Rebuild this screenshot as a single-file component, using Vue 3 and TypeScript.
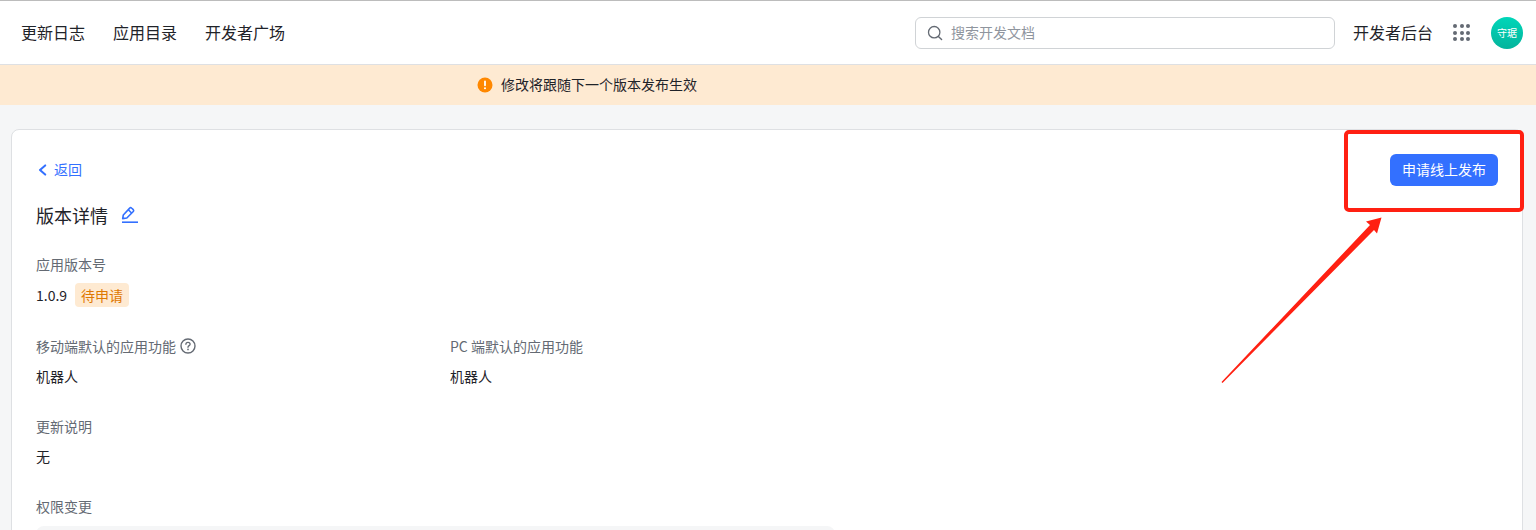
<script setup lang="ts">
const navItems: string[] = ['更新日志', '应用目录', '开发者广场']
const dots: number[] = [1, 2, 3, 4, 5, 6, 7, 8, 9]
</script>

<template>
  <div class="page">
    <header class="header">
      <nav class="nav">
        <a v-for="item in navItems" :key="item" class="nav-item">{{ item }}</a>
      </nav>
      <div class="search">
        <svg class="search-icon" width="16" height="16" viewBox="0 0 16 16" fill="none">
          <circle cx="7.2" cy="7.2" r="5.7" stroke="#646a73" stroke-width="1.3" />
          <path d="M11.4 11.4L14.6 14.6" stroke="#646a73" stroke-width="1.4" stroke-linecap="round" />
        </svg>
        <span class="placeholder">搜索开发文档</span>
      </div>
      <a class="console">开发者后台</a>
      <div class="grid-icon">
        <i v-for="d in dots" :key="d" class="dot"></i>
      </div>
      <div class="avatar">守琚</div>
    </header>

    <div class="banner">
      <svg width="16" height="16" viewBox="0 0 16 16">
        <circle cx="8" cy="8" r="7.5" fill="#ff8800" />
        <rect x="7.1" y="3.6" width="1.8" height="5.6" rx="0.9" fill="#fff" />
        <circle cx="8" cy="11.2" r="1.05" fill="#fff" />
      </svg>
      <span class="banner-text">修改将跟随下一个版本发布生效</span>
    </div>

    <main class="card">
      <div class="topline">
        <a class="back">
          <svg width="12" height="12" viewBox="0 0 12 12" fill="none">
            <path d="M9.2 1.4L4 6L9.2 10.6" stroke="#3370ff" stroke-width="2" stroke-linecap="round" stroke-linejoin="round" />
          </svg>
          <span class="back-text">返回</span>
        </a>
        <button class="publish" type="button">申请线上发布</button>
      </div>

      <div class="title-row">
        <h1 class="title">版本详情</h1>
        <svg class="edit-icon" width="18" height="18" viewBox="0 0 18 18" fill="none">
          <path d="M2.7 12.6L3.3 9L9.7 2.1C10.2 1.5 11 1.5 11.5 2L13.3 3.7C13.8 4.2 13.8 5 13.3 5.5L6.8 12L2.7 12.6Z" stroke="#3370ff" stroke-width="1.6" stroke-linejoin="round" />
          <path d="M8.3 3.8L11.6 7" stroke="#3370ff" stroke-width="1.6" />
          <path d="M2 16.2H18" stroke="#3370ff" stroke-width="1.6" />
        </svg>
      </div>

      <section class="field version">
        <div class="label">应用版本号</div>
        <div class="value version-value">
          <span>1.0.9</span>
          <span class="tag">待申请</span>
        </div>
      </section>

      <section class="two-col">
        <div class="field col">
          <div class="label label-icon">
            <span>移动端默认的应用功能</span>
            <svg width="16" height="16" viewBox="0 0 16 16" fill="none">
              <circle cx="8" cy="8" r="7" stroke="#646a73" stroke-width="1.4" />
              <path d="M5.9 6.3C5.9 5.1 6.8 4.3 8 4.3C9.2 4.3 10.1 5.1 10.1 6.2C10.1 7.6 8 7.7 8 9.3" stroke="#646a73" stroke-width="1.3" stroke-linecap="round" />
              <circle cx="8" cy="11.4" r="0.85" fill="#646a73" />
            </svg>
          </div>
          <div class="value">机器人</div>
        </div>
        <div class="field col">
          <div class="label">PC 端默认的应用功能</div>
          <div class="value">机器人</div>
        </div>
      </section>

      <section class="field">
        <div class="label">更新说明</div>
        <div class="value">无</div>
      </section>

      <section class="field">
        <div class="label">权限变更</div>
        <div class="perm-box"></div>
      </section>
    </main>

    <svg class="annotation" width="1536" height="530" viewBox="0 0 1536 530" fill="none">
      <rect x="1346" y="132" width="176" height="78" rx="3" stroke="#ff2012" stroke-width="4" />
      <path d="M1221.5 382L1370 225L1366 221.5L1381.5 217.5L1377 233.5L1374 230L1222.5 383Z" fill="#ff2012" />
    </svg>
  </div>
</template>

<style>
html,
body {
  margin: 0;
  padding: 0;
  background: #f5f6f7;
  overflow: hidden;
}
</style>

<style scoped>
.page {
  position: relative;
  width: 1536px;
  height: 530px;
  overflow: hidden;
  background: #f5f6f7;
  font-family: "Noto Sans CJK SC", "Noto Sans", sans-serif;
  color: #1f2329;
}
.header {
  display: flex;
  align-items: center;
  height: 64px;
  box-sizing: border-box;
  background: #fff;
  border-top: 1px solid #bcbcbc;
  padding: 0 13px 0 21px;
}
.nav {
  display: flex;
  gap: 28px;
  flex: 1;
  margin-bottom: 2px;
}
.nav-item {
  font-size: 16px;
  line-height: 24px;
}
.search {
  display: flex;
  align-items: center;
  gap: 8px;
  box-sizing: border-box;
  width: 420px;
  height: 32px;
  padding: 0 11px;
  border: 1px solid #d0d3d6;
  border-radius: 6px;
  background: #fff;
}
.search-icon {
  flex: none;
}
.placeholder {
  margin-bottom: 2px;
  font-size: 14px;
  line-height: 20px;
  color: #8f959e;
}
.console {
  margin-left: 18px;
  margin-bottom: 2px;
  font-size: 16px;
  line-height: 24px;
}
.grid-icon {
  display: grid;
  grid-template-columns: repeat(3, 4px);
  gap: 2.5px;
  margin-left: 20px;
}
.dot {
  width: 4px;
  height: 4px;
  border-radius: 50%;
  background: #646a73;
}
.avatar {
  display: flex;
  align-items: center;
  justify-content: center;
  width: 32px;
  height: 32px;
  margin-left: 21px;
  border-radius: 50%;
  background: linear-gradient(180deg, #00d6b9, #04b49c);
  color: #fff;
  font-size: 10px;
  white-space: nowrap;
}
.banner {
  display: flex;
  align-items: center;
  justify-content: center;
  gap: 8px;
  box-sizing: border-box;
  border-top: 1px solid #dee0e3;
  height: 41px;
  padding-right: 362px;
  background: #feead2;
  font-size: 14px;
  line-height: 20px;
}
.banner-text {
  margin-bottom: 2px;
}
.card {
  box-sizing: border-box;
  height: 500px;
  margin: 24px 13px 0 11px;
  padding: 24px 24px 0;
  background: #fff;
  border: 1px solid #dee0e3;
  border-radius: 8px;
}
.topline {
  display: flex;
  align-items: center;
  justify-content: space-between;
  height: 32px;
}
.back {
  display: flex;
  align-items: center;
  gap: 6px;
  font-size: 14px;
  line-height: 20px;
  color: #3370ff;
}
.back-text {
  margin-bottom: 2px;
}
.publish {
  box-sizing: border-box;
  width: 108px;
  height: 32px;
  padding: 0 0 2px;
  border: 0;
  border-radius: 6px;
  background: #3370ff;
  color: #fff;
  font-family: inherit;
  font-size: 14px;
}
.title-row {
  display: flex;
  align-items: center;
  gap: 12px;
  height: 28px;
  margin-top: 16px;
}
.title {
  margin: 0 0 2px;
  font-size: 18px;
  font-weight: 400;
  line-height: 26px;
}
.edit-icon {
  margin-bottom: 2px;
}
.field {
  margin-top: 28px;
}
.label {
  font-size: 14px;
  line-height: 22px;
  color: #646a73;
}
.label-icon {
  display: flex;
  align-items: center;
  gap: 4px;
}
.value {
  margin-top: 8px;
  font-size: 14px;
  line-height: 22px;
}
.version {
  margin-top: 23px;
}
.version-value {
  display: flex;
  align-items: center;
  gap: 8px;
  height: 24px;
  margin-top: 8px;
}
.tag {
  padding: 0 6px;
  border-radius: 4px;
  background: #feead2;
  color: #de7802;
  font-size: 14px;
  line-height: 24px;
}
.two-col {
  display: flex;
  margin-top: 28px;
}
.two-col .field {
  margin-top: 0;
}
.col {
  width: 414px;
}
.perm-box {
  width: 799px;
  height: 40px;
  margin-top: 9px;
  border-radius: 8px;
  background: #f5f6f7;
}
.annotation {
  position: absolute;
  top: 0;
  left: 0;
  pointer-events: none;
}
</style>
